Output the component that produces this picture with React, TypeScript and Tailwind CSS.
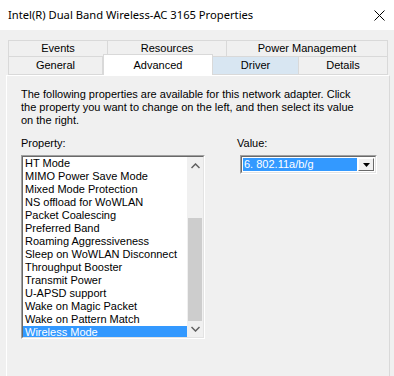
import React from "react";

const items = [
  "HT Mode",
  "MIMO Power Save Mode",
  "Mixed Mode Protection",
  "NS offload for WoWLAN",
  "Packet Coalescing",
  "Preferred Band",
  "Roaming Aggressiveness",
  "Sleep on WoWLAN Disconnect",
  "Throughput Booster",
  "Transmit Power",
  "U-APSD support",
  "Wake on Magic Packet",
  "Wake on Pattern Match",
  "Wireless Mode",
];

export default function App() {
  return (
    <div
      className="w-[394px] h-[376px] bg-[#f0f0f0] overflow-hidden text-black"
      style={{ fontFamily: '"Liberation Sans", Arial, sans-serif' }}
    >
      {/* Title bar */}
      <div className="h-[30px] bg-white flex items-center justify-between pl-2 pr-[8px]">
        <span className="text-[11.2px]" style={{ fontFamily: '"Noto Sans", sans-serif' }}>
          Intel(R) Dual Band Wireless-AC 3165 Properties
        </span>
        <svg width="11" height="11" viewBox="0 0 11 11" className="mr-[1px]">
          <path d="M0.5 0.5 L10.5 10.5 M10.5 0.5 L0.5 10.5" stroke="#000" strokeWidth="1" />
        </svg>
      </div>

      {/* Tabs */}
      <div className="mt-[10px] ml-[8px] w-[380px] text-[11px]">
        <div className="flex h-[17px]">
          <div className="w-[100px] border border-[#d9d9d9] flex items-center justify-center">Events</div>
          <div className="w-[119px] border-y border-r border-[#d9d9d9] flex items-center justify-center">Resources</div>
          <div className="flex-1 border-y border-r border-[#d9d9d9] flex items-center justify-center">Power Management</div>
        </div>
        <div className="flex h-[18px] items-end">
          <div className="w-[95px] h-[18px] border-x border-b border-[#d9d9d9] flex items-center justify-center">General</div>
          <div className="w-[110px] h-[21px] -mt-[3px] bg-white border-x border-t border-[#d9d9d9] flex items-start justify-center pt-[2px] relative z-10">
            Advanced
          </div>
          <div className="w-[86px] h-[18px] bg-[#d8e6f2] border-r border-b border-[#d9d9d9] flex items-center justify-center">Driver</div>
          <div className="flex-1 h-[18px] border-r border-b border-[#d9d9d9] flex items-center justify-center">Details</div>
        </div>
      </div>

      {/* Panel */}
      <div className="ml-[6px] w-[384px] h-[400px] border-l border-t border-white border-r-[#d9d9d9] border-r pt-[12px] pl-[14px] text-[11px] leading-[13px]">
        <div className="whitespace-nowrap">
          The following properties are available for this network adapter. Click
          <br />
          the property you want to change on the left, and then select its value
          <br />
          on the right.
        </div>

        <div className="flex mt-[10px]">
          {/* Property column */}
          <div className="w-[184px]">
            <div className="h-[13px]">Property:</div>
            <div className="mt-[5px] w-[184px] h-[184px] border border-t-[#a0a0a0] border-l-[#a0a0a0] border-r-white border-b-white">
              <div className="w-full h-full border border-t-[#696969] border-l-[#696969] border-r-[#e3e3e3] border-b-[#e3e3e3] bg-white flex overflow-hidden">
                <div className="flex-1 pt-0 overflow-hidden">
                  {items.map((it) => (
                    <div
                      key={it}
                      className={
                        it === "Wireless Mode"
                          ? "h-[13px] leading-[13px] bg-[#3399ff] text-white pl-[2px] whitespace-nowrap"
                          : "h-[13px] leading-[13px] pl-[2px] whitespace-nowrap"
                      }
                    >
                      {it}
                    </div>
                  ))}
                </div>
                <div className="w-[16px] h-full bg-[#f0f0f0] flex flex-col">
                  <div className="h-[17px] flex items-center justify-center">
                    <svg width="9" height="6" viewBox="0 0 9 6">
                      <path d="M0.5 5 L4.5 1 L8.5 5" stroke="#606060" strokeWidth="1.5" fill="none" />
                    </svg>
                  </div>
                  <div className="h-[44px]" />
                  <div className="h-[103px] mx-[1px] bg-[#cdcdcd]" />
                  <div className="flex-1 flex items-center justify-center">
                    <svg width="9" height="6" viewBox="0 0 9 6">
                      <path d="M0.5 1 L4.5 5 L8.5 1" stroke="#606060" strokeWidth="1.5" fill="none" />
                    </svg>
                  </div>
                </div>
              </div>
            </div>
          </div>

          {/* Value column */}
          <div className="ml-[32px]">
            <div className="h-[13px]">Value:</div>
            <div className="mt-[5px] ml-[3px] w-[137px] h-[19px] border border-t-[#a0a0a0] border-l-[#a0a0a0] border-r-white border-b-white">
              <div className="w-full h-full border border-t-[#696969] border-l-[#696969] border-r-[#e3e3e3] border-b-[#e3e3e3] bg-white flex p-[1px]">
                <div className="flex-1 bg-[#3399ff] text-white pl-[1px] leading-[13px] whitespace-nowrap">6. 802.11a/b/g</div>
                <div className="w-[16px] ml-[1px] bg-[#f0f0f0] border border-t-white border-l-white border-r-[#696969] border-b-[#696969] flex items-center justify-center">
                  <svg width="7" height="4" viewBox="0 0 7 4">
                    <path d="M0 0 L7 0 L3.5 4 Z" fill="#000" />
                  </svg>
                </div>
              </div>
            </div>
          </div>
        </div>
      </div>
    </div>
  );
}
